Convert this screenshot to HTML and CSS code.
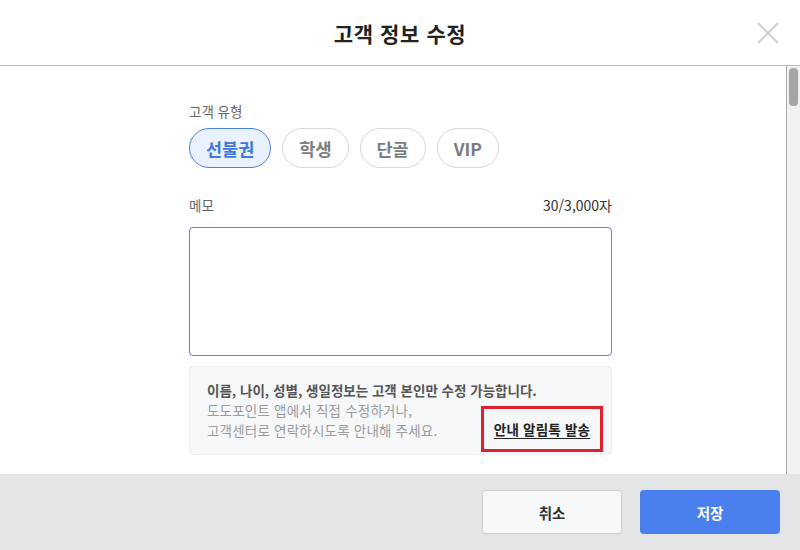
FILE: index.html
```html
<!DOCTYPE html>
<html lang="ko">
<head>
    <meta charset="UTF-8">
    <meta name="viewport" content="width=device-width, initial-scale=1.0">
    <title>고객 정보 수정</title>
    <link rel="stylesheet" href="styles.css">
</head>
<body>

    <div class="modal">

        <!-- Header -->
        <header class="modal-header">
            <h1>고객 정보 수정</h1>
            <button class="close-btn" aria-label="닫기">
                <svg width="24" height="24" viewBox="0 0 24 24">
                    <path d="M2 2 L22 22 M22 2 L2 22" stroke="#cfd1d3" stroke-width="2" fill="none"/>
                </svg>
            </button>
        </header>

        <!-- Body -->
        <div class="modal-body">
            <div class="body-content">
                <div class="field">
                    <div class="field-label">고객 유형</div>
                    <div class="chips">
                        <button class="chip active">선불권</button>
                        <button class="chip">학생</button>
                        <button class="chip">단골</button>
                        <button class="chip">VIP</button>
                    </div>
                </div>

                <div class="field memo">
                    <div class="memo-head">
                        <span class="field-label">메모</span>
                        <span class="counter">30/3,000자</span>
                    </div>
                    <textarea class="memo-input"></textarea>
                </div>

                <div class="notice">
                    <p class="notice-title">이름, 나이, 성별, 생일정보는 고객 본인만 수정 가능합니다.</p>
                    <div class="notice-row">
                        <p class="notice-text">도도포인트 앱에서 직접 수정하거나,<br>고객센터로 연락하시도록 안내해 주세요.</p>
                        <div class="notice-action">
                            <a href="#">안내 알림톡 발송</a>
                        </div>
                    </div>
                </div>
            </div>

            <!-- Scrollbar -->
            <div class="scrollbar">
                <div class="scroll-thumb"></div>
            </div>
        </div>

        <!-- Footer -->
        <footer class="modal-footer">
            <button class="btn btn-cancel">취소</button>
            <button class="btn btn-save">저장</button>
        </footer>

    </div>

</body>
</html>
```

FILE: styles.css
```css
/* 기본 */
* {
    box-sizing: border-box;
}

body {
    margin: 0;
    padding: 0;
    font-family: 'Noto Sans CJK KR', 'Noto Sans', sans-serif;
    color: #333;
    background-color: #fff;
}

button {
    font-family: inherit;
    cursor: pointer;
}

.modal {
    width: 800px;
    height: 550px;
    display: flex;
    flex-direction: column;
}

/* Header */
.modal-header {
    height: 66px;
    flex-shrink: 0;
    border-bottom: 1px solid #b9bbbd;
    display: flex;
    align-items: center;
    justify-content: center;
    position: relative;
}

.modal-header h1 {
    margin: 0;
    font-size: 21px;
    font-weight: bold;
    color: #222;
    letter-spacing: 0.6px;
}

.close-btn {
    position: absolute;
    top: 21px;
    right: 20px;
    padding: 0;
    border: none;
    background: none;
    width: 24px;
    height: 24px;
}

/* Body */
.modal-body {
    flex: 1;
    display: flex;
    min-height: 0;
}

.body-content {
    flex: 1;
    padding: 36px 0 0 189px;
}

.field-label {
    font-size: 13.5px;
    line-height: 18px;
    color: #666;
}

.chips {
    display: flex;
    gap: 11px;
    margin-top: 8px;
}

.chip {
    height: 40px;
    padding: 0 16px;
    border: 1px solid #d6d7d9;
    border-radius: 20px;
    background-color: #fff;
    color: #7a7c7f;
    font-size: 17.5px;
    font-weight: bold;
}

.chip.active {
    min-width: 80px;
    border-color: #4b80df;
    background-color: #e9f1ff;
    color: #3f79dc;
}

.memo {
    margin-top: 28px;
    width: 423px;
}

.memo-head {
    display: flex;
    justify-content: space-between;
    align-items: center;
}

.counter {
    font-size: 14px;
    line-height: 18px;
    color: #333;
}

.memo-input {
    display: block;
    width: 423px;
    height: 129px;
    margin-top: 13px;
    border: 1px solid #5a86cc;
    border-radius: 4px;
    resize: none;
    outline: none;
}

/* 안내 박스 */
.notice {
    width: 423px;
    margin-top: 10px;
    padding: 13px 8px 2px 17px;
    background-color: #f6f7f9;
    border: 1px solid #eceef0;
    border-radius: 4px;
}

.notice p {
    margin: 0;
    font-size: 13.5px;
    line-height: 20px;
}

.notice-title {
    font-weight: bold;
    color: #555;
}

.notice-row {
    display: flex;
    justify-content: space-between;
    align-items: flex-start;
}

.notice-text {
    color: #999b9e;
    padding-bottom: 12px;
    letter-spacing: 0.2px;
}

.notice-action {
    margin-top: 6px;
    width: 122px;
    height: 46px;
    border: 3px solid #e0202b;
    display: flex;
    align-items: center;
    justify-content: center;
}

.notice-action a {
    font-size: 13.5px;
    font-weight: bold;
    color: #222;
    text-decoration: underline;
    text-underline-offset: 3px;
    letter-spacing: 0.2px;
}

/* 스크롤바 */
.scrollbar {
    width: 14px;
    flex-shrink: 0;
    background-color: #eef2f3;
    border-left: 1px solid #a9abad;
    padding: 2px 2px 0 2px;
}

.scroll-thumb {
    height: 38px;
    background-color: #a3a6a9;
    border-radius: 4px;
}

/* Footer */
.modal-footer {
    height: 76px;
    flex-shrink: 0;
    background-color: #e4e5e6;
    display: flex;
    justify-content: flex-end;
    align-items: flex-start;
    gap: 18px;
    padding: 16px 20px 0 0;
}

.btn {
    width: 140px;
    height: 44px;
    border-radius: 4px;
    font-size: 14.5px;
    font-weight: bold;
}

.btn-cancel {
    background-color: #f7f8fa;
    border: 1px solid #ccced0;
    color: #333;
}

.btn-save {
    background-color: #4a80ee;
    border: none;
    color: #fff;
}
```
